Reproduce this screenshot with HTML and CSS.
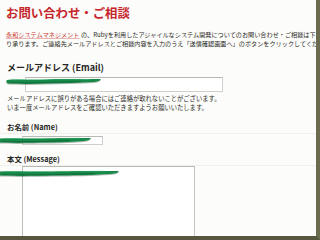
FILE: index.html
```html
<!DOCTYPE html>
<html lang="ja">
<head>
<meta charset="utf-8">
<title>お問い合わせ・ご相談</title>
<link rel="stylesheet" href="styles.css">
</head>
<body>
<div class="page">
  <h1 class="title">お問い合わせ・ご相談</h1>
  <div class="intro">
    <div class="line"><a class="link" href="#">永和システムマネジメント</a> の、Rubyを利用したアジャイルなシステム開発についてのお問い合わせ・ご相談は下</div>
    <div class="line">り承ります。ご連絡先メールアドレスとご相談内容を入力のうえ「<span class="strong">送信確認画面へ</span>」のボタンをクリックしてくだ</div>
  </div>
  <h2 class="label label-lg">メールアドレス (Email)</h2>
  <div class="field field-email"></div>
  <div class="help">
    <div class="line">メールアドレスに誤りがある場合にはご連絡が取れないことがございます。</div>
    <div class="line">いま一度メールアドレスをご確認いただきますようお願いいたします。</div>
  </div>
  <h3 class="label label-sm">お名前 (Name)</h3>
  <div class="rule"></div>
  <div class="field field-name"></div>
  <h3 class="label label-sm label-msg">本文 (Message)</h3>
  <div class="rule"></div>
  <div class="field field-message"></div>

  <svg class="scribble scribble-email" width="96" height="8" viewBox="0 0 96 8"><path d="M1 3 C10 1.5 25 3.5 40 2.5 C55 1.5 70 2.5 95 2 C94 3.5 92 4.5 88 5 C72 6 58 6 42 6.5 C28 7 12 7 2 6.5 C0 5.5 0 4 1 3 Z" fill="#178a4a"/><path d="M3 5.5 C20 6.5 45 5.5 75 4.5" stroke="#0c5a2d" stroke-width="1.2" fill="none" opacity="0.55"/><path d="M6 2.8 C25 2.2 50 2.6 80 2.3" stroke="#3fb672" stroke-width="0.8" fill="none" opacity="0.5"/></svg>
  <svg class="scribble scribble-name" width="92" height="8" viewBox="0 0 92 8"><path d="M0 2.5 C12 1.5 26 3 42 2.5 C58 1.5 72 2 91 2 C90 3.5 88 4.5 84 5 C70 6 56 6.5 40 6.5 C24 7 10 7 0 6.5 Z" fill="#178a4a"/><path d="M2 5.5 C20 6.5 40 5.5 70 4.5" stroke="#0c5a2d" stroke-width="1.2" fill="none" opacity="0.55"/><path d="M4 2.6 C25 2.2 50 2.5 80 2.2" stroke="#3fb672" stroke-width="0.8" fill="none" opacity="0.5"/></svg>
  <svg class="scribble scribble-message" width="120" height="8" viewBox="0 0 120 8"><path d="M0 2.5 C15 1.5 32 3 52 2.5 C72 1.5 92 2 119 2 C118 3.5 116 4.5 110 5 C92 6 74 6.5 52 6.5 C30 7 12 7 0 6.5 Z" fill="#178a4a"/><path d="M2 5.5 C25 6.5 55 5.5 95 4.5" stroke="#0c5a2d" stroke-width="1.2" fill="none" opacity="0.55"/><path d="M4 2.6 C30 2.2 65 2.5 105 2.2" stroke="#3fb672" stroke-width="0.8" fill="none" opacity="0.5"/></svg>
</div>
</body>
</html>
```
FILE: styles.css
```css
html, body {
  margin: 0;
  padding: 0;
  background: #fcfcfa;
}
body {
  font-family: "Noto Sans CJK JP", "Noto Sans", sans-serif;
  color: #2c2c28;
}
.page {
  position: relative;
  width: 320px;
  height: 240px;
  box-sizing: border-box;
  border-right: 4px solid #6b6b50;
  border-bottom: 4px solid #57573f;
  background: #fcfcfa;
  overflow: hidden;
  display: flex;
  flex-direction: column;
}
.title {
  margin: 0;
  padding: 5px 0 0 6px;
  font-size: 12.4px;
  line-height: 16px;
  font-weight: 700;
  color: #c6262b;
}
.intro {
  margin-top: 8.5px;
  padding-left: 6px;
  font-size: 6.15px;
  line-height: 9.5px;
}
.line {
  white-space: nowrap;
}
.link {
  color: #c93a30;
  text-decoration: underline;
  text-decoration-color: #e9b3ae;
}
.strong {
  color: #1e1e1a;
}
.label {
  margin: 0;
  padding-left: 7px;
  font-weight: 700;
  color: #262622;
}
.label-lg {
  margin-top: 13.5px;
  font-size: 9px;
  line-height: 12px;
}
.label-sm {
  margin-top: 10px;
  font-size: 7.4px;
  line-height: 10px;
}
.label-msg {
  margin-top: 9px;
}
.field {
  box-sizing: border-box;
  border: 1px solid #cfcfcb;
  border-top-color: #b8b8b4;
  background: #ffffff;
  flex: none;
}
.field-email {
  margin: 3px 0 0 25px;
  width: 198px;
  height: 15px;
}
.help {
  margin-top: 2px;
  padding-left: 7px;
  font-size: 6.3px;
  line-height: 9px;
}
.rule {
  margin-top: 1px;
  height: 1px;
  background: #efefeb;
  flex: none;
}
.field-name {
  margin: 2px 0 0 22px;
  width: 81px;
  height: 9px;
}
.field-message {
  margin-left: 22px;
  width: 173px;
  flex: 1;
  border-bottom: none;
  border-left-color: #bdbdb9;
  border-right-color: #c4c4c0;
}
.scribble {
  position: absolute;
  filter: blur(0.35px) drop-shadow(0 1px 0.6px rgba(20, 60, 30, 0.35));
}
.scribble-email {
  left: 6px;
  top: 77px;
}
.scribble-name {
  left: 0;
  top: 136px;
}
.scribble-message {
  left: 0;
  top: 169px;
}
```
